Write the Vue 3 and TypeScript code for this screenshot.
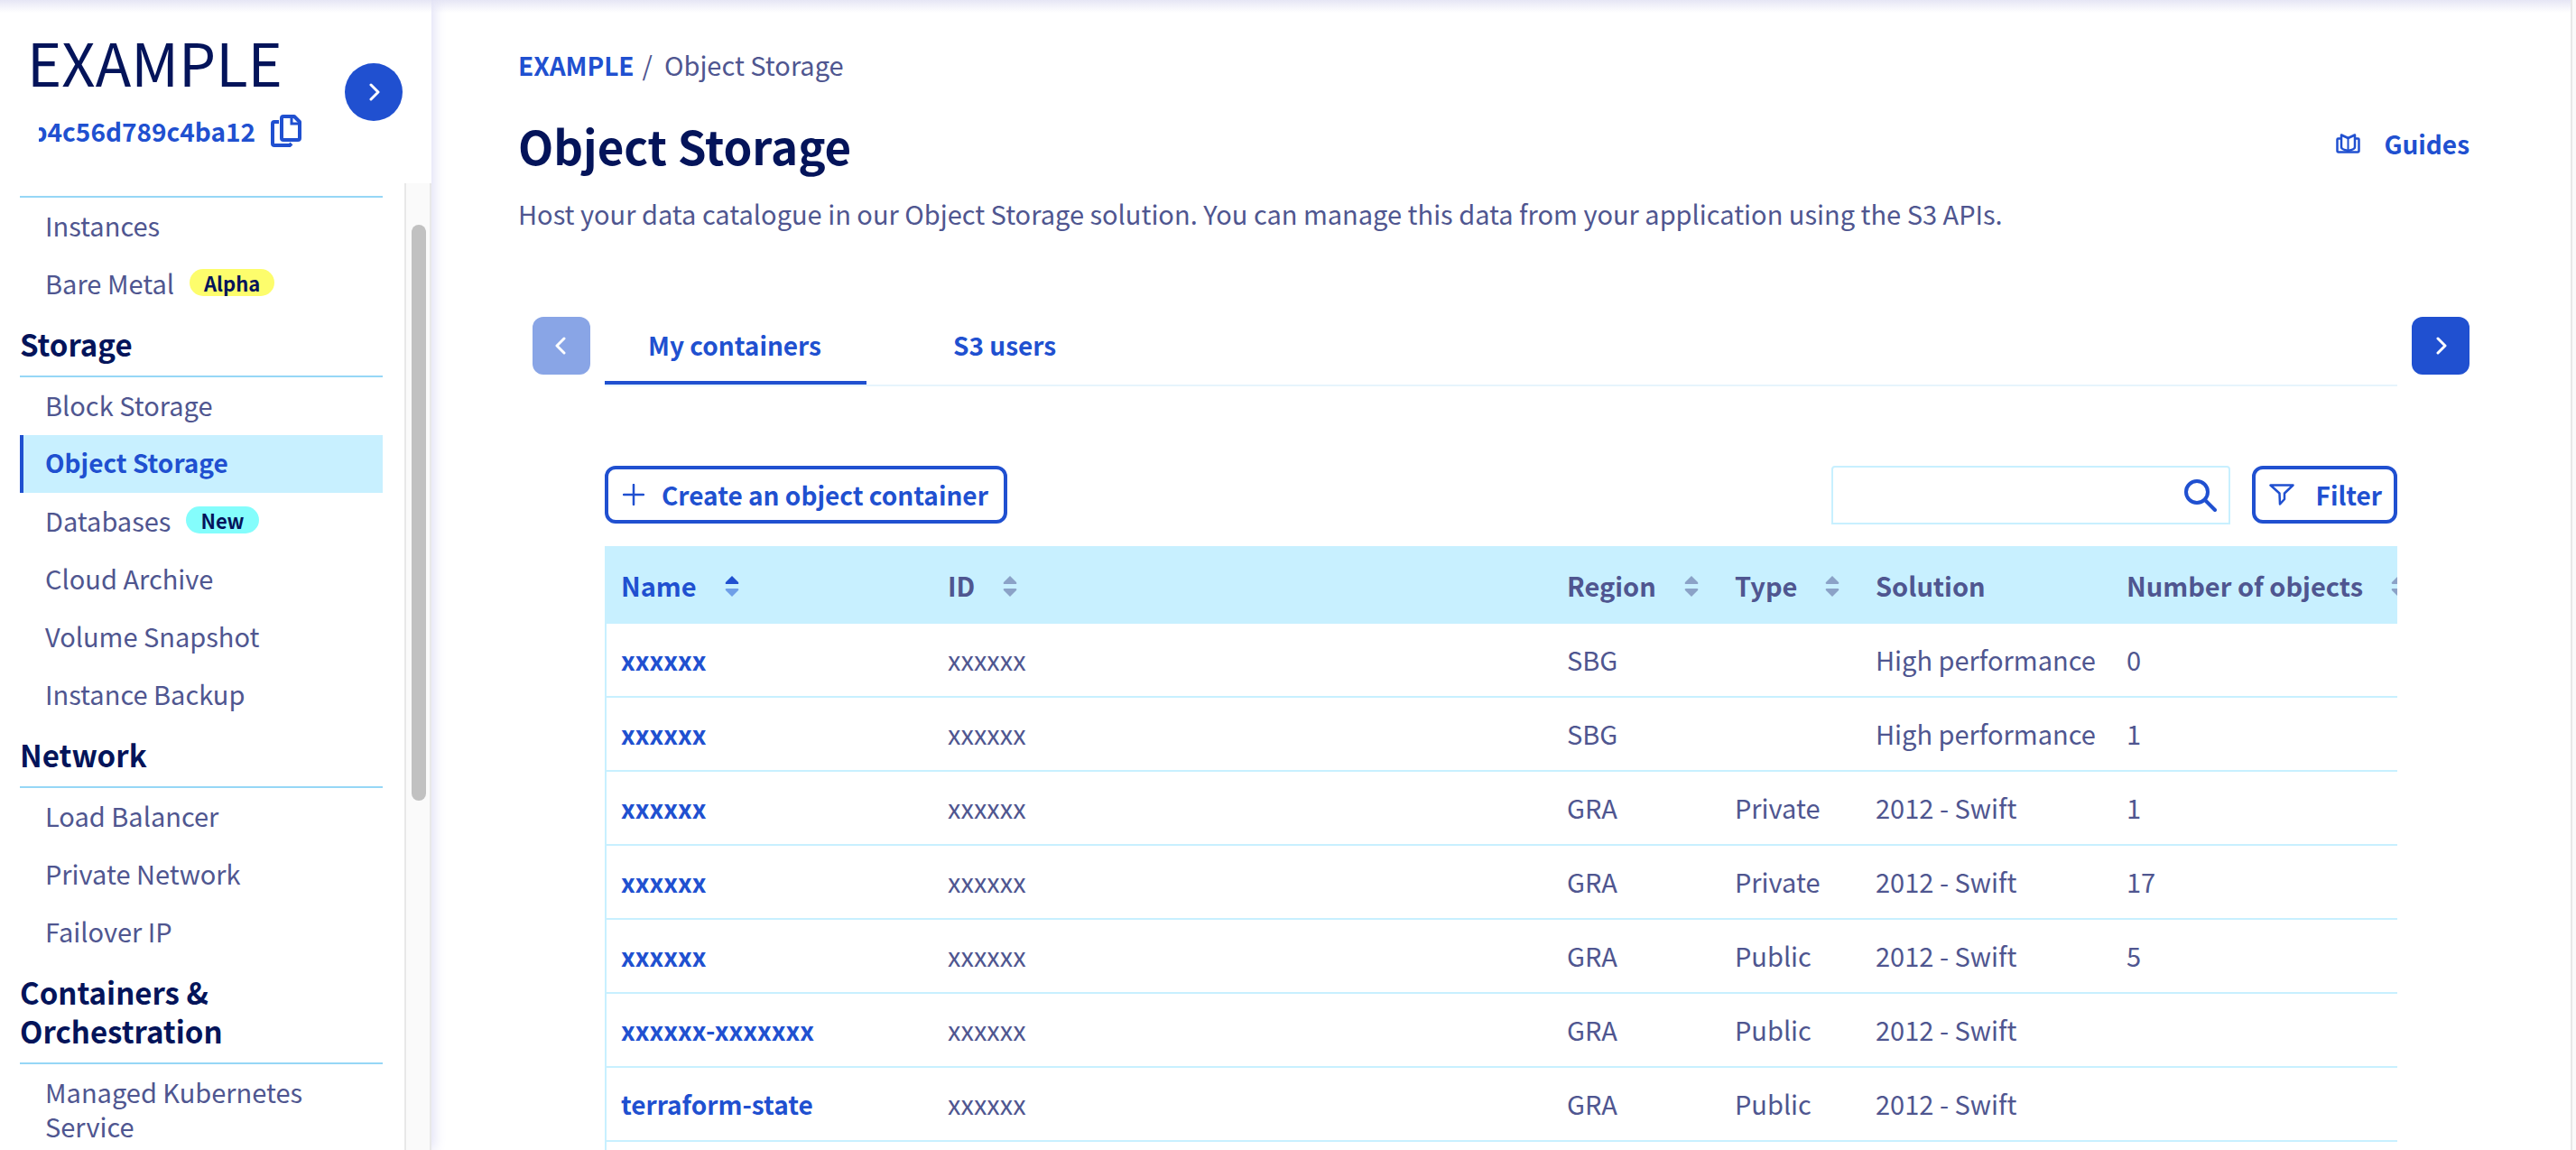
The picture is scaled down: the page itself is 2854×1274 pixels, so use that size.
<script setup lang="ts">
import { ref } from 'vue'

interface NavItem { label: string; badge?: string; tone?: string; active?: boolean }
interface NavSection { title?: string; items: NavItem[] }
interface Column { label: string; cls: string; sortable: boolean; active?: boolean }
interface Row { name: string; id: string; region: string; type: string; solution: string; count: string }

const sections: NavSection[] = [
  { items: [{ label: 'Instances' }, { label: 'Bare Metal', badge: 'Alpha', tone: 'yellow' }] },
  {
    title: 'Storage',
    items: [
      { label: 'Block Storage' },
      { label: 'Object Storage', active: true },
      { label: 'Databases', badge: 'New', tone: 'cyan' },
      { label: 'Cloud Archive' },
      { label: 'Volume Snapshot' },
      { label: 'Instance Backup' },
    ],
  },
  { title: 'Network', items: [{ label: 'Load Balancer' }, { label: 'Private Network' }, { label: 'Failover IP' }] },
  { title: 'Containers & Orchestration', items: [{ label: 'Managed Kubernetes Service' }] },
]

const columns: Column[] = [
  { label: 'Name', cls: 'c-name', sortable: true, active: true },
  { label: 'ID', cls: 'c-id', sortable: true },
  { label: 'Region', cls: 'c-region', sortable: true },
  { label: 'Type', cls: 'c-type', sortable: true },
  { label: 'Solution', cls: 'c-solution', sortable: false },
  { label: 'Number of objects', cls: 'c-count', sortable: true },
]

const rows: Row[] = [
  { name: 'xxxxxx', id: 'xxxxxx', region: 'SBG', type: '', solution: 'High performance', count: '0' },
  { name: 'xxxxxx', id: 'xxxxxx', region: 'SBG', type: '', solution: 'High performance', count: '1' },
  { name: 'xxxxxx', id: 'xxxxxx', region: 'GRA', type: 'Private', solution: '2012 - Swift', count: '1' },
  { name: 'xxxxxx', id: 'xxxxxx', region: 'GRA', type: 'Private', solution: '2012 - Swift', count: '17' },
  { name: 'xxxxxx', id: 'xxxxxx', region: 'GRA', type: 'Public', solution: '2012 - Swift', count: '5' },
  { name: 'xxxxxx-xxxxxxx', id: 'xxxxxx', region: 'GRA', type: 'Public', solution: '2012 - Swift', count: '' },
  { name: 'terraform-state', id: 'xxxxxx', region: 'GRA', type: 'Public', solution: '2012 - Swift', count: '' },
]

const search = ref('')
</script>

<template>
  <div class="app">
    <aside class="sidebar">
      <header class="project">
        <div class="project-info">
          <div class="project-name">EXAMPLE</div>
          <div class="project-id">
            <span class="id-clip"><span>b4c56d789c4ba12</span></span>
            <button class="plain" type="button" aria-label="Copy project ID">
              <svg width="34" height="37" viewBox="0 0 34 37" fill="none" stroke="currentColor" stroke-width="4">
                <path d="M14 2h12l6 6v18a2 2 0 0 1-2 2H14a2 2 0 0 1-2-2V4a2 2 0 0 1 2-2z" stroke-linejoin="round" />
                <path d="M23 3v7h8" stroke-width="3" />
                <path d="M9 8H4a2 2 0 0 0-2 2v22a2 2 0 0 0 2 2h17l2-2" />
              </svg>
            </button>
          </div>
        </div>
        <button class="round" type="button" aria-label="Expand menu">
          <svg width="20" height="20" viewBox="0 0 20 20" fill="none" stroke="currentColor" stroke-width="3" stroke-linecap="round" stroke-linejoin="round"><path d="M7 2l8 8-8 8" /></svg>
        </button>
      </header>
      <div class="nav-wrap">
        <nav class="nav">
          <section v-for="(s, i) in sections" :key="i" class="nav-section">
            <h2 v-if="s.title">{{ s.title }}</h2>
            <ul>
              <li v-for="item in s.items" :key="item.label">
                <a href="#" :class="['nav-link', { active: item.active }]">
                  <span>{{ item.label }}</span>
                  <span v-if="item.badge" :class="['badge', item.tone]">{{ item.badge }}</span>
                </a>
              </li>
            </ul>
          </section>
        </nav>
        <div class="track"><div class="thumb"></div></div>
      </div>
    </aside>

    <main class="main">
      <div class="crumbs"><a href="#">EXAMPLE</a><span class="slash">/</span><span>Object Storage</span></div>
      <div class="title-row">
        <h1>Object Storage</h1>
        <a class="guides" href="#">
          <svg width="27" height="22" viewBox="0 0 27 22" fill="none" stroke="currentColor" stroke-width="2.5" stroke-linejoin="round">
            <path d="M6 5.500H2.500a1 1 0 0 0-1 1V19a1.500 1.500 0 0 0 1.500 1.500h21a1.500 1.500 0 0 0 1.500-1.500V6.500a1 1 0 0 0-1-1H21" />
            <path d="M13.500 5L6 1.500V15q0 2.500 7.500 4 7.500-1.500 7.500-4V1.500z" />
            <path d="M13.500 5v15" stroke-width="2" />
          </svg>
          <span>Guides</span>
        </a>
      </div>
      <p class="lead">Host your data catalogue in our Object Storage solution. You can manage this data from your application using the S3 APIs.</p>

      <div class="tabs-row">
        <button class="square" type="button" disabled aria-label="Previous tabs">
          <svg width="20" height="20" viewBox="0 0 20 20" fill="none" stroke="currentColor" stroke-width="3" stroke-linecap="round" stroke-linejoin="round"><path d="M13 2l-8 8 8 8" /></svg>
        </button>
        <div class="tabs" role="tablist">
          <button class="tab selected" type="button" role="tab" aria-selected="true">My containers</button>
          <button class="tab" type="button" role="tab" aria-selected="false">S3 users</button>
        </div>
        <button class="square" type="button" aria-label="Next tabs">
          <svg width="20" height="20" viewBox="0 0 20 20" fill="none" stroke="currentColor" stroke-width="3" stroke-linecap="round" stroke-linejoin="round"><path d="M7 2l8 8-8 8" /></svg>
        </button>
      </div>

      <div class="content">
        <div class="toolbar">
          <button class="outline" type="button">
            <svg width="24" height="24" viewBox="0 0 24 24" fill="none" stroke="currentColor" stroke-width="2.500" stroke-linecap="round"><path d="M12 1v22M1 12h22" /></svg>
            <span>Create an object container</span>
          </button>
          <div class="tools">
            <form class="search" role="search" @submit.prevent>
              <input v-model="search" type="text" aria-label="Search" />
              <button class="plain" type="submit" aria-label="Search">
                <svg width="36" height="36" viewBox="0 0 36 36" fill="none" stroke="currentColor" stroke-width="4" stroke-linecap="round"><circle cx="14" cy="14" r="12" /><path d="M23 23l11 11" /></svg>
              </button>
            </form>
            <button class="outline filter" type="button">
              <svg width="28" height="24" viewBox="0 0 28 24" fill="none" stroke="currentColor" stroke-width="2.500" stroke-linejoin="round"><path d="M1.500 1.500h25L17 10.500V17l-5 5.500-.5-12z" /></svg>
              <span>Filter</span>
            </button>
          </div>
        </div>
        <div class="table-wrap">
          <table>
            <thead>
              <tr>
                <th v-for="c in columns" :key="c.label" scope="col" :class="[c.cls, { sorted: c.active }]">
                  <span class="th-inner">
                    <span>{{ c.label }}</span>
                    <svg v-if="c.sortable" class="sort" width="16" height="24" viewBox="0 0 16 24" fill="currentColor">
                      <path class="up" d="M8 0l7 7q1 2-1 2H2Q0 9 1 7z" />
                      <path class="down" d="M8 23l7-7q1-2-1-2H2q-2 0-1 2z" />
                    </svg>
                  </span>
                </th>
              </tr>
            </thead>
            <tbody>
              <tr v-for="(r, i) in rows" :key="i">
                <td><a href="#">{{ r.name }}</a></td>
                <td>{{ r.id }}</td>
                <td>{{ r.region }}</td>
                <td>{{ r.type }}</td>
                <td>{{ r.solution }}</td>
                <td>{{ r.count }}</td>
              </tr>
              <tr><td></td><td></td><td></td><td></td><td></td><td></td></tr>
            </tbody>
          </table>
        </div>
      </div>
    </main>
    <div class="page-track"></div>
  </div>
</template>

<style>
body { margin: 0; overflow: hidden; }
</style>

<style scoped>
* { box-sizing: border-box; }
.app {
  --blue: #2050d0;
  --text: #4f5690;
  --navy: #04145a;
  --pale: #c8f0ff;
  display: flex;
  height: 100vh;
  overflow: hidden;
  background: linear-gradient(#e6e6f5, #ffffff 14px);
  color: var(--text);
  font-family: "Noto Sans CJK SC", "Noto Sans", sans-serif;
  font-size: 29px;
  line-height: 38px;
}
a { color: var(--blue); font-size: 28px; font-weight: 700; text-decoration: none; }
button { font: inherit; color: inherit; cursor: pointer; }
svg { display: block; flex: none; }
h1, h2, p, ul { margin: 0; padding: 0; }
ul { list-style: none; }

.sidebar {
  display: flex;
  flex-direction: column;
  flex: none;
  width: 478px;
  box-shadow: 2px 0 14px #dcdcf4;
}
.project { display: flex; justify-content: space-between; flex: none; height: 203px; padding: 28px 32px 0 30px; }
.project-name { color: var(--navy); font-size: 65px; line-height: 80px; }
.project-id { display: flex; align-items: center; gap: 17px; margin-top: 18px; padding-left: 13px; color: var(--blue); font-size: 28px; font-weight: 700; }
.id-clip { display: flex; justify-content: flex-end; width: 240px; overflow: hidden; }
.plain { display: flex; padding: 0; border: 0; background: none; color: var(--blue); }
.round {
  display: grid;
  place-items: center;
  width: 64px;
  height: 64px;
  margin-top: 42px;
  padding: 0;
  border: 0;
  border-radius: 50%;
  background: var(--blue);
  color: #fff;
}
.nav-wrap { display: flex; flex: 1; min-height: 0; overflow: hidden; }
.nav { flex: 1; padding: 14px 24px 0 22px; }
.nav h2 { padding: 13px 0; color: var(--navy); font-size: 33px; font-weight: 700; line-height: 43px; }
.nav ul { border-top: 2px solid #96d7f6; }
.nav-link {
  display: flex;
  align-items: center;
  gap: 17px;
  padding: 11px 24px 15px;
  border-left: 4px solid transparent;
  color: var(--text);
  font-size: 29px;
  font-weight: 400;
}
.nav-link.active { border-color: var(--blue); background: var(--pale); color: var(--blue); font-size: 28px; font-weight: 700; }
.badge { padding: 0 16px; border-radius: 15px; color: var(--navy); font-size: 22px; font-weight: 700; line-height: 30px; }
.yellow { background: #fdfd6c; }
.cyan { background: #84fdfc; }
.track { flex: none; width: 30px; padding: 46px 4px 0 6px; border: solid #e8e8e8; border-width: 0 2px; background: #fafafa; }
.thumb { width: 16px; height: 638px; border-radius: 8px; background: #c1c1c1; }

.main { flex: 1; min-width: 0; padding: 52px 112px 0 96px; }
.crumbs { display: flex; align-items: baseline; }
.slash { margin: 0 13px 0 9px; }
.title-row { display: flex; align-items: flex-start; justify-content: space-between; margin-top: 34px; }
h1 { color: var(--navy); font-size: 51px; font-weight: 700; line-height: 72px; }
.guides { display: flex; align-items: center; gap: 26px; margin-top: 15px; }
.lead { margin-top: 20px; }
.tabs-row { display: flex; gap: 16px; margin-top: 96px; padding-left: 16px; }
.square {
  display: grid;
  place-items: center;
  flex: none;
  width: 64px;
  height: 64px;
  padding: 0;
  border: 0;
  border-radius: 12px;
  background: var(--blue);
  color: #fff;
}
.square:disabled { background: #89a5e6; color: #fff; }
.tabs { display: flex; flex: 1; gap: 48px; height: 77px; border-bottom: 2px solid #e6f4fc; }
.tab { padding: 0 50px 10px 48px; border: 0; border-bottom: 4px solid transparent; background: none; color: var(--blue); font-size: 28px; font-weight: 700; }
.selected { border-color: var(--blue); }
.content { margin: 88px 80px 0 96px; }
.toolbar { display: flex; justify-content: space-between; }
.outline {
  display: flex;
  align-items: center;
  gap: 19px;
  height: 64px;
  padding: 0 17px 0 16px;
  border: 4px solid var(--blue);
  border-radius: 12px;
  background: #fff;
  color: var(--blue);
  font-size: 28px;
  font-weight: 700;
}
.filter { gap: 24px; padding: 0 13px 0 15px; }
.tools { display: flex; gap: 24px; }
.search { display: flex; align-items: center; width: 442px; height: 65px; padding-right: 13px; border: 2px solid var(--pale); border-radius: 4px 4px 0 0; }
.search input { flex: 1; min-width: 0; height: 56px; border: 0; outline: 0; background: none; color: var(--text); font: inherit; }
.table-wrap { margin-top: 24px; overflow: hidden; border-left: 2px solid var(--pale); }
table { width: calc(100% + 56px); table-layout: fixed; border-collapse: separate; border-spacing: 0; }
th { height: 86px; padding: 0 16px; background: var(--pale); font-weight: 700; text-align: left; white-space: nowrap; }
td { height: 82px; padding: 0 16px 2px; border-bottom: 2px solid var(--pale); white-space: nowrap; }
.th-inner { display: flex; align-items: center; gap: 31px; }
.sorted { color: var(--blue); }
.sort { margin-top: 4px; opacity: 0.5; }
.sorted .sort { opacity: 1; }
.sorted .down { fill: #6f9fe8; }
.c-name { width: 362px; }
.c-region { width: 186px; }
.c-type { width: 156px; }
.c-solution { width: 278px; }
.c-count { width: 372px; }
.page-track { flex: none; width: 6px; border-left: 2px solid #e8e8e8; background: #fafafa; }
</style>
